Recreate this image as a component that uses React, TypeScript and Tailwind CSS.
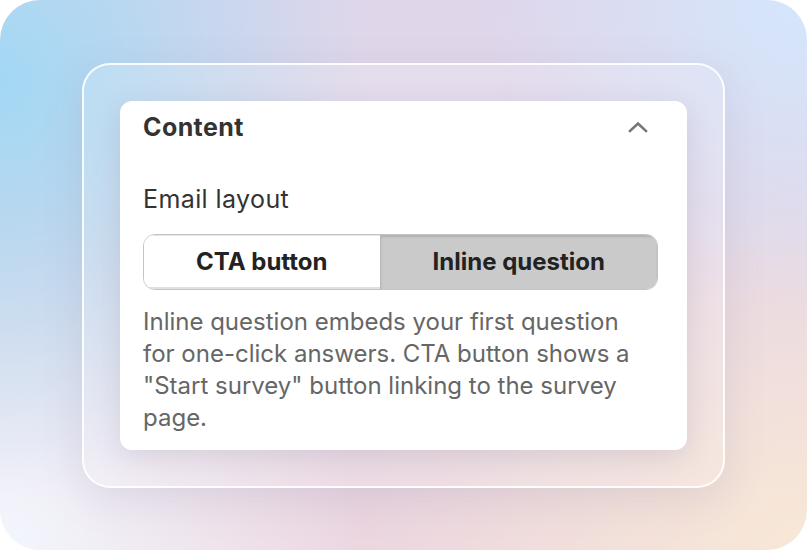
import { useState } from 'react'

type Layout = 'cta' | 'inline'

export default function App() {
  const [layout, setLayout] = useState<Layout>('inline')
  const [open, setOpen] = useState(true)

  return (
    <main className="h-[550px] w-[807px] bg-white font-['Inter',_'Noto_Sans',_sans-serif]">
      <div className="flex h-full w-full items-center justify-center overflow-hidden rounded-[40px] bg-[radial-gradient(ellipse_45%_75%_at_0%_15%,#a2d8f4_0%,rgba(162,216,244,0)_100%),radial-gradient(ellipse_40%_55%_at_100%_0%,#d4e6fc_0%,rgba(212,230,252,0)_100%),radial-gradient(ellipse_55%_65%_at_100%_100%,#f8e8d6_0%,rgba(248,232,214,0)_100%),radial-gradient(ellipse_45%_60%_at_0%_100%,#f3f7fe_0%,rgba(243,247,254,0)_100%),linear-gradient(#dfd6eb,#ecd6e0)]">
        <div className="rounded-[28px] border-2 border-white/90 bg-white/15 p-[36px] shadow-[0_12px_40px_rgba(120,110,150,0.16)]">
          <section className="w-[567px] rounded-[12px] bg-white pb-[16px] pl-[23px] pr-[29px] pt-[10px] shadow-[0_8px_30px_rgba(90,80,120,0.16)]">
            <div className="flex items-center justify-between">
              <h2 className="text-[25px] font-bold leading-[32px] tracking-[0.4px] text-[#333]">
                Content
              </h2>
              <button
                onClick={() => setOpen(!open)}
                className="mr-[10px] flex h-[32px] w-[20px] items-center justify-center"
              >
                <svg width="20" height="12" viewBox="0 0 20 12" fill="none">
                  <path
                    d="M2 10L10 2.5L18 10"
                    stroke="#777"
                    strokeWidth="2.6"
                    strokeLinecap="square"
                  />
                </svg>
              </button>
            </div>

            {open && (
              <>
                <p className="mt-[40px] text-[25px] leading-[32px] tracking-[0.4px] text-[#333]">
                  Email layout
                </p>

                <div className="mt-[19px] flex h-[56px] overflow-hidden rounded-[12px] border border-[#c4c4c4]">
                  <button
                    onClick={() => setLayout('cta')}
                    className={
                      layout === 'cta'
                        ? 'flex-auto bg-[#cacaca] text-[24px] font-bold text-[#222] shadow-[inset_0_2px_2px_rgba(0,0,0,0.12)]'
                        : 'flex-auto border-t border-[#e6e6e6] bg-white text-[24px] font-bold text-[#222] shadow-[inset_0_-2px_0_rgba(0,0,0,0.12)]'
                    }
                  >
                    CTA button
                  </button>
                  <button
                    onClick={() => setLayout('inline')}
                    className={
                      layout === 'inline'
                        ? 'flex-auto border-l border-[#b8b8b8] bg-[#cacaca] text-[24px] font-bold text-[#222] shadow-[inset_0_2px_2px_rgba(0,0,0,0.12)]'
                        : 'flex-auto border-l border-[#b8b8b8] bg-white text-[24px] font-bold text-[#222] shadow-[inset_0_-2px_0_rgba(0,0,0,0.12)]'
                    }
                  >
                    Inline question
                  </button>
                </div>

                <p className="mt-[16px] max-w-[500px] text-[24px] leading-[32px] text-[#666]">
                  Inline question embeds your first question for one-click
                  answers. CTA button shows a "Start survey" button linking to
                  the survey page.
                </p>
              </>
            )}
          </section>
        </div>
      </div>
    </main>
  )
}
